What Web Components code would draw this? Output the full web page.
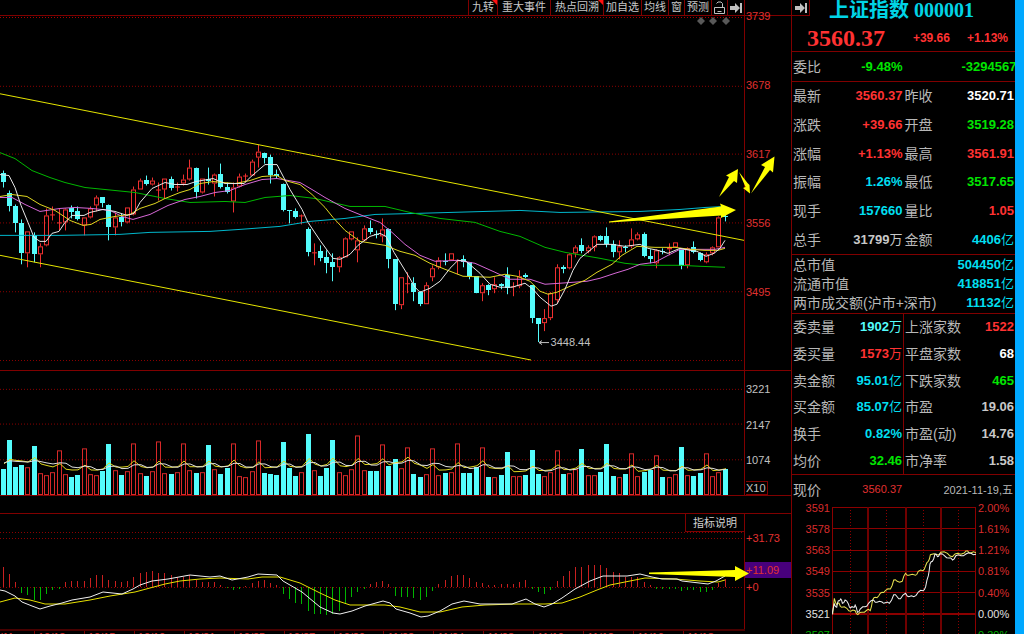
<!DOCTYPE html>
<html lang="zh-CN">
<head>
<meta charset="utf-8">
<title>上证指数 000001</title>
<style>
html, body { margin: 0; height: 100%; background: #000; }
</style>
</head>
<body>
<stock-terminal></stock-terminal>
<script>
const SANS = '"Liberation Sans", "Noto Sans CJK SC", sans-serif';

class BaseElement extends HTMLElement {
  connectedCallback() {
    if (this.shadowRoot) return;
    this.attachShadow({ mode: 'open' }).innerHTML =
      `<style>*{box-sizing:border-box}${this.styles()}</style>${this.markup()}`;
  }
}

/* candles: [high, body top, body bottom, low, rising?] */
const CANDLES = `170 172 181 187 c|190 193 206 211 c|204 206 223 232 c|219 223 253 264 c|231 231 253 267 r|232 235 254 262 c|243 246 254 267 r|208 215 245 246 r|206 214 214 220 r|208 222 222 230 r|208 209 222 230 r|205 208 212 218 c|206 211 219 220 c|217 217 225 235 r|206 208 217 218 r|195 197 205 211 r|197 197 203 207 c|204 205 227 240 c|212 217 227 235 r|213 217 222 226 c|207 207 222 223 r|186 189 214 215 r|178 180 189 189 r|175 179 183 185 c|177 180 184 185 r|182 189 189 200 r|178 178 189 198 r|176 178 187 190 c|182 186 186 191 r|174 179 183 185 r|159 167 179 180 r|167 167 191 198 c|178 178 192 193 r|167 178 180 184 c|173 174 183 196 r|163 173 186 188 c|182 186 191 193 c|182 187 201 212 r|173 176 186 187 r|173 175 175 182 r|159 161 175 175 r|144 151 157 167 r|152 152 157 163 c|154 156 174 183 c|169 173 175 178 c|183 183 210 211 c|210 210 211 223 c|208 211 217 218 c|214 215 216 224 r|227 229 252 256 c|243 252 252 265 r|245 251 258 261 c|250 257 263 273 c|253 262 267 281 c|256 257 267 272 r|237 238 257 257 r|231 231 239 240 r|237 240 250 262 r|225 228 240 241 r|220 228 232 234 c|230 234 234 238 c|218 229 236 242 r|228 229 259 268 c|259 259 304 310 c|277 277 305 309 r|272 283 283 293 r|277 283 292 301 c|291 292 304 306 c|282 285 304 304 r|265 268 277 281 r|257 260 267 269 r|253 261 261 265 c|253 253 260 260 r|259 260 260 274 r|255 259 262 267 c|262 262 276 279 c|276 276 293 293 c|283 285 293 301 r|284 285 290 295 c|277 284 289 293 r|283 284 286 289 c|267 275 288 294 c|282 286 286 296 r|270 276 286 288 r|273 275 277 278 c|285 285 318 323 c|318 318 324 342 c|309 318 323 331 r|292 293 318 320 r|264 267 300 303 r|265 267 269 273 c|253 254 268 269 r|245 247 253 257 r|238 245 251 253 c|245 247 251 253 r|235 236 247 251 r|235 236 240 241 c|227 236 244 247 c|240 244 252 257 c|240 246 252 259 r|245 247 247 252 c|228 239 246 248 r|232 234 239 240 r|232 234 256 257 c|249 256 259 263 c|249 250 263 268 r|248 251 251 254 c|243 247 249 255 r|242 242 247 247 r|250 250 266 269 c|247 248 265 268 r|241 247 252 253 c|252 253 260 261 c|252 254 262 263 r|246 247 253 255 r|216 217 247 247 r|212 216 217 221 c`
  .split('|').map(s => s.split(' '));

/* bar tops, in thirds of a unit below the pane's origin */
const VOLUME = '331c 243c 325c 318c 323r 262c 343r 348r 340r 273r 346r 355c 347c 268r 346r 348r 336c 256c 332r 347c 337r 251r 343r 350c 337r 246r 343r 345c 340r 251r 334r 342c 340r 259c 329r 345c 328c 251r 350r 355r 337r 244r 342c 345c 347c 248c 326c 350c 340r 224c 334r 352c 328c 243c 340r 348r 329r 228r 334r 337c 337c 255r 321c 300c 326r 265r 346c 355c 346r 268r 348r 343c 340r 251r 342c 342c 323c 263r 355c 355r 347c 278c 352r 352r 347c 273c 345c 352r 340r 274r 345c 343r 330r 270c 348r 348r 340c 254c 350c 355r 346c 281r 350r 340c 333c 287r 355c 353r 346r 264c 348r 350c 342c 281r 350r 340r 330c'.split(' ');

const HIST = [186,207,231,264,270,285,285,266,254,251,232,227,227,227,219,210,210,225,227,232,227,216,203,200,197,205,205,210,216,216,211,225,230,232,232,240,250,254,251,243,235,228,224,234,240,266,282,294,297,318,326,328,330,327,318,294,275,261,251,237,232,227,237,272,275,276,279,285,275,257,237,225,213,210,210,219,232,235,240,240,237,237,237,230,225,251,261,267,254,227,213,197,186,185,181,180,181,189,200,205,216,216,216,230,240,251,251,251,251,258,256,256,261,261,256,234,222];

const xAt = i => Math.round(3.6 + i * 6.224);
const line = (pts, color) => `<polyline points="${pts}" fill="none" stroke="${color}" stroke-width="1"/>`;
const dotted = (y, w = 744, c = '#8c0000') =>
  `<path d="M0 ${y}.5H${w}" stroke="${c}" stroke-dasharray="1 2" shape-rendering="crispEdges"/>`;
const svg = (w, h, body) => `<svg viewBox="0 0 ${w} ${h}" preserveAspectRatio="none" aria-hidden="true">${body}</svg>`;
const CHART_CSS = ':host{display:block;min-width:0;min-height:0;overflow:hidden}svg{display:block;width:100%;height:100%}';

customElements.define('price-chart', class extends BaseElement {
  styles() {
    return CHART_CSS + `:host{position:relative}
      .low{position:absolute;left:74%;top:92.2%;transform:translateY(-50%);font:11px/16px ${SANS};color:#c0c0c0}`;
  }
  markup() {
    const bars = CANDLES.map(([h, t, b, l, k], i) => {
      const x = xAt(i), up = k === 'r';
      if (!up) return `<path d="M${x - .5} ${h}V${l}" stroke="#54fcfc"/><rect x="${x - 3}" y="${t}" width="5" height="${Math.max(1, b - t)}" fill="#54fcfc"/>`;
      if (b - t < 2) return `<path d="M${x - .5} ${h}V${l}M${x - 3} ${+t + .5}h5" stroke="#f03030"/>`;
      return `<path d="M${x - .5} ${h}V${t}M${x - .5} ${b}V${l}" stroke="#f03030"/><rect x="${x - 2.5}" y="${+t + .5}" width="4" height="${b - t - 1}" fill="none" stroke="#f03030"/>`;
    }).join('');
    const lines = [
      ['0,235 60,235 120,234 150,232 210,231 240,229 280,226 310,221 345,218 375,214 415,213 450,212 520,210 560,212 640,211 680,209 705,207 725,206', '#00b8cc'],
      ['0,152 15,158 32,170 50,177 65,182 85,187 105,189 135,192 165,198 190,202 225,201 245,202 265,197 290,195 315,198 350,206 385,206 410,212 440,218 475,222 500,231 520,236 545,247 565,252 600,258 625,263 645,265 680,265 700,266 725,267', '#00b800'],
      ['0,197 12,197 25,204 40,211 60,208 75,207 92,208 110,210 122,216 133,219 150,214 168,205 185,199 200,196 215,192 230,190 245,184 262,179 277,178 300,182 312,189 325,197 345,208 362,215 380,222 392,232 405,244 420,255 435,261 458,260 475,263 495,272 510,279 530,279 545,284 560,283 587,281 600,278 615,273 628,269 640,264 655,262 670,254 680,249 700,249 715,249 725,247', '#d868d8'],
      ['0,196 12,194 27,196 40,204 55,210 70,220 83,225 91,224 100,219 115,216 130,214 140,208 155,203 165,198 180,192 190,189 200,183 213,181 235,183 250,180 262,176 277,175 285,180 300,184 312,194 325,207 333,217 345,230 360,241 385,245 400,251 415,255 430,263 445,269 463,276 490,277 505,274 517,276 530,281 540,291 548,294 557,292 570,286 585,280 597,272 612,264 622,255 637,246 655,247 675,247 690,249 705,250 718,250 725,248', '#e0d820'],
      ['0,174 9,175 15,187 21,205 28,222 34,237 40,241 46,241 52,233 59,231 65,222 72,215 84,215 90,212 103,209 115,211 127,215 134,213 140,202 152,188 165,182 175,184 187,184 196,181 213,178 225,183 244,183 250,177 258,170 265,164 277,164 290,189 302,209 308,222 320,240 333,258 340,259 350,254 358,245 370,236 380,233 386,236 394,252 408,275 415,287 420,292 430,288 440,281 450,268 458,260 466,261 480,273 490,284 500,287 512,287 525,283 533,289 540,297 551,306 557,304 565,289 573,270 580,258 590,250 597,244 612,244 625,246 640,244 648,248 658,250 668,253 680,248 690,250 697,251 706,256 714,253 720,248 725,240', '#e8e8e8'],
      ['0,93 744,240', '#e6e600'], ['0,255 531,360', '#e6e600']
    ];
    const gem = x => `<path d="M${x} 16l4 4-4 4-4-4z" fill="#585858"/>`;
    return svg(744, 355, `<g transform="translate(0 -15)">
      ${dotted(16, 744, '#b00000')}${[85, 153, 222, 291, 360].map(y => dotted(y)).join('')}
      <g shape-rendering="crispEdges">${bars}</g>
      ${lines.map(a => line(...a)).join('')}
      ${gem(701)}${gem(713)}${gem(726)}
      <path d="M539 342.500h10M542 340.500l-3 2 3 2" stroke="#c0c0c0" fill="none"/></g>`)
      + '<span class="low">3448.44</span>';
  }
});

customElements.define('volume-chart', class extends BaseElement {
  styles() { return CHART_CSS; }
  markup() {
    const tops = VOLUME.map(v => parseInt(v, 10) / 3);
    const bars = VOLUME.map((v, i) => {
      const x = xAt(i), y = Math.round(tops[i]) - 11;
      return v.endsWith('c')
        ? `<rect x="${x - 3}" y="${y}" width="5" height="${125 - y}" fill="#54fcfc"/>`
        : `<rect x="${x - 2.5}" y="${y + .5}" width="4" height="${124 - y}" fill="none" stroke="#d82828"/>`;
    }).join('');
    const average = n => tops.map((_, i) => {
      let sum = 0;
      for (let k = i - n + 1; k <= i; k++) sum += k < 0 ? 103 : tops[k];
      return `${xAt(i)},${(sum / n - 11).toFixed(1)}`;
    }).join(' ');
    return svg(744, 125, [18, 53, 89].map(y => dotted(y)).join('')
      + `<g shape-rendering="crispEdges">${bars}</g>` + line(average(5), '#e0d820') + line(average(10), '#e0e0e0'));
  }
});

customElements.define('macd-chart', class extends BaseElement {
  styles() { return CHART_CSS; }
  markup() {
    const bars = HIST.map((v, i) => {
      const x = xAt(i) - .5, y = Math.round(v / 3) + 505;
      return `<path d="M${x} 587V${y}" stroke="${v < 247 ? '#c82020' : '#00b400'}"/>`;
    }).join('');
    return svg(744, 115, `<g transform="translate(0 -514)">${dotted(532)}${dotted(538)}${dotted(587)}
      <g shape-rendering="crispEdges">${bars}</g>`
      + line('0,602 15,598 30,600 45,604 65,604 90,600 110,596 135,592 150,588 165,584 180,581 200,579 220,578 248,579 262,577 280,577 300,583 320,593 335,600 350,605 385,605 400,607 420,612 440,612 462,607 485,605 515,604 545,604 562,603 580,597 597,590 610,585 630,581 645,578 675,579 700,581 718,582 725,580', '#e6e000')
      + line('0,590 5,591 15,596 22,602 32,606 40,609 50,606 62,603 72,600 90,597 103,592 122,594 133,589 140,585 152,581 168,579 190,575 210,577 220,576 232,580 248,577 258,574 277,575 283,581 302,592 320,607 333,613 340,614 352,611 365,606 383,601 390,603 396,609 410,613 421,617 428,616 440,611 452,604 464,601 480,604 512,604 526,599 535,604 544,607 552,604 562,598 575,589 590,581 603,576 627,576 640,574 652,577 662,579 677,579 682,581 708,584 716,581 725,576', '#f0f0f0')
      + '</g>');
  }
});

customElements.define('intraday-chart', class extends BaseElement {
  styles() { return CHART_CSS; }
  markup() {
    const conv = s => s.split(' ').map(p => {
      const [x, y] = p.split(',').map(Number);
      return [(x - 141) / 3, (y - 99) / 3];
    });
    const jitter = (s, amount) => {
      const p = conv(s), out = [];
      p.forEach(([x, y], i) => {
        out.push(`${x.toFixed(1)},${y.toFixed(1)}`);
        if (i < p.length - 1) {
          const [nx, ny] = p[i + 1];
          out.push(`${((x + nx) / 2).toFixed(1)},${((y + ny) / 2 + (i % 2 ? amount : -amount)).toFixed(1)}`);
        }
      });
      return out.join(' ');
    };
    const grid = [0, 21, 43, 64, 85].map(y => `M0 ${y}.5H143`).join('');
    return svg(143, 127, `<g shape-rendering="crispEdges" fill="none" stroke="#8c0000"><path d="${grid}M.5 0V127M142.500 0V127"/>
      <path d="M0 107H143" stroke-width="2"/><path d="M36 0V127M73 0V127M108 0V127" stroke-width="2" stroke="#700000"/>
      <path d="M18.500 0V127M54.500 0V127M90.500 0V127M125.500 0V127" stroke-dasharray="1 2"/></g>`
      + line(jitter('143,420 148,373 155,392 162,388 170,400 185,403 197,412 210,410 218,422 230,415 245,408 255,410 262,378 270,370 280,366 290,355 300,350 315,345 325,318 335,322 350,322 360,298 370,304 390,304 398,292 412,290 420,275 428,262 434,242 455,242 465,235 485,238 500,248 515,238 535,237 545,231 555,237 570,236', 1), '#e6e050')
      + line(jitter('141,422 148,390 155,400 160,380 167,375 172,388 180,378 190,390 196,402 205,400 210,393 217,415 225,405 240,398 250,388 265,378 275,385 290,384 300,386 312,388 325,362 335,368 345,374 360,358 370,368 385,368 398,354 412,350 420,338 428,305 433,270 440,262 448,240 455,248 462,240 475,244 490,252 500,258 510,245 525,245 540,240 555,238 570,241', 1), '#f0f0f0'));
  }
});

/* one pane: plot on the left, scale labels on the right */
customElements.define('chart-pane', class extends BaseElement {
  styles() {
    return `:host{display:grid;grid-template-columns:minmax(0,1fr) 46px;border-top:1px solid #800000;min-height:0}
      .plot{display:grid;min-width:0;min-height:0;border-right:1px solid #800000}
      .plot ::slotted(*){grid-area:1/1}
      .axis{display:flex;flex-direction:column;min-height:0}`;
  }
  markup() { return '<div class="plot"><slot></slot></div><div class="axis"><slot name="axis"></slot></div>'; }
});

const SKIP = (c = '#c0c0c0') => `<svg width="12" height="10" viewBox="0 0 12 10" aria-hidden="true"><path d="M0 3h5V0l5 5-5 5V7H0zM10 0h2v10h-2z" fill="${c}"/></svg>`;

customElements.define('tool-bar', class extends BaseElement {
  styles() {
    return `:host{display:grid;grid-template-columns:minmax(0,1fr) 46px;height:15px}
      nav{display:flex;justify-content:flex-end;border-right:1px solid #800000}
      button{appearance:none;margin:0;padding:0 3px;height:15px;border:0;border-left:1px solid #800000;background:#000;color:#c8c8c8;
        font:11px/15px ${SANS};white-space:nowrap;position:relative;display:flex;align-items:center;justify-content:center}
      .m{padding:0 4px}
      .s{padding:0 2px}
      .hot::after{content:"";position:absolute;right:0;top:0;width:5px;height:5px;background:#ff1010;clip-path:polygon(0 0,100% 0,100% 100%)}`;
  }
  markup() {
    return `<nav><button class="hot" type="button">九转</button><button class="m" type="button">重大事件</button><button class="hot m" type="button">热点回溯</button><button class="s" type="button">加自选</button><button class="s" type="button">均线</button><button class="s" type="button">窗</button><button class="s" type="button">预测</button>
      <button class="s" type="button" aria-label="锁定"><svg width="11" height="13" viewBox="0 0 11 13" fill="none" stroke="#c0c0c0"><path d="M.5 6.500h10v6H.5zM8.500 6.500V2.500l-1.500-1.500h-3l-1.500 1.500M3.500 10.500h4"/></svg></button>
      <button class="s" type="button" aria-label="移到最右">${SKIP()}</button></nav>`;
  }
});

/* the strip runs past the window's lower edge */
customElements.define('date-strip', class extends BaseElement {
  styles() {
    return `:host{display:block;border-top:2px solid #480000;height:5px;overflow:hidden;margin-right:46px}
      ol{list-style:none;display:grid;grid-template-columns:68fr repeat(13,100fr) 124fr;margin:0;padding:0}
      li{min-width:0;border-left:1px solid #800000;padding-left:3px;white-space:nowrap;font:11px/12px ${SANS};color:#e03030}
      li:first-child{border:0;padding:0 20px 0 0;display:flex;justify-content:flex-end}`;
  }
  markup() {
    return `<ol>${'10/11 10/13 10/15 10/19 10/21 10/25 10/27 10/29 11/02 11/04 11/08 11/10 11/12 11/16 11/18'.split(' ').map(d => `<li>${d}</li>`).join('')}</ol>`;
  }
});

/* rows="label,value,colour[,label,value,colour];…" */
customElements.define('quote-table', class extends BaseElement {
  styles() {
    return `:host{display:block;border-top:1px solid #800000;min-height:0}
      table{width:100%;height:100%;border-collapse:collapse;table-layout:fixed}
      th,td{padding:0;white-space:nowrap;line-height:16px;vertical-align:middle}
      th{font-weight:400;font-size:14px;text-align:left;color:#b8b8b8;padding-left:1px}
      td{font-weight:700;font-size:13px;text-align:right;padding-right:1px}
      i{font-style:normal;font-weight:400}
      .a{width:20%}.b{width:30%}.c{width:26%}.d{width:24%}.w{width:70%}
      :host([divided]) .c{border-left:1px solid #800000}
      .red{color:#ff3232}.green{color:#00e600}.cyan{color:#00dff0}.aqua{color:#54fcfc}.white{color:#fff}.gray{color:#c8c8c8}`;
  }
  markup() {
    const cell = (l, v, c, k1, k2) => `<th scope="row" class="${k1}">${l}</th><td class="${k2} ${c}">${v.replace(/[万亿]/, '<i>$&</i>')}</td>`;
    return `<table>${this.getAttribute('rows').split(';').map(r => {
      const f = r.split(',');
      return '<tr>' + (f.length > 3 ? cell(f[0], f[1], f[2], 'a', 'b') + cell(f[3], f[4], f[5], 'c', 'd') : cell(f[0], f[1], f[2], 'w', '')) + '</tr>';
    }).join('')}</table>`;
  }
});

customElements.define('quote-panel', class extends BaseElement {
  styles() {
    return `:host{display:grid;grid-template-rows:51px 30px 173fr 59fr 161fr 33px 127fr;border-left:1px solid #800000;min-height:0;overflow:hidden;font-family:${SANS}}
      header{display:grid;grid-template-columns:18px 1fr;grid-template-rows:20px 1fr}
      header button{appearance:none;margin:0;padding:0;height:16px;background:#000;border:solid #800000;border-width:0 1px 1px 0;display:flex;align-items:center;justify-content:center}
      h1{margin:0;font:700 20px/20px "Liberation Serif","Noto Sans CJK SC",serif;color:#00d4e6;padding-left:19px;white-space:nowrap}
      .now{grid-column:1/3;display:flex;align-items:center;color:#ff3232;font-weight:700;font-size:12px;padding:4px 7px 0 15px;white-space:nowrap}
      .now strong{font:700 24px/24px "Liberation Serif",serif;margin-right:auto}
      .now span + span{margin-left:17px}
      .last{display:flex;align-items:center;justify-content:space-between;border-top:1px solid #800000;font-size:11px;color:#b8b8b8;padding:0 2px 4px 1px}
      .last b{font-weight:400;font-size:14px}.last em{font-style:normal;color:#e03030}
      .mini{display:grid;grid-template-columns:40px minmax(0,1fr) 39px;min-height:0}
      ol{list-style:none;margin:-7px 0 0;padding:0;height:100%;font-size:11px;line-height:16px;color:#d82c2c}
      li{height:calc(100%/6)}
      ol.l{text-align:right;padding-right:2px}ol.r{padding-left:2px}
      .z{color:#e0e0e0}.g{color:#00b400}`;
  }
  markup() {
    const scale = (k, s) => `<ol class="${k}">${s.split(' ').map((t, i) => `<li class="${i === 5 ? 'z' : i === 6 ? 'g' : ''}">${t}</li>`).join('')}</ol>`;
    return `<header><button type="button" aria-label="收起">${SKIP()}</button><h1>上证指数 000001</h1>
      <div class="now"><strong>3560.37</strong><span>+39.66</span><span>+1.13%</span></div></header>
      <quote-table rows="委比,-9.48%,green,,-3294567,green"></quote-table>
      <quote-table rows="最新,3560.37,red,昨收,3520.71,white;涨跌,+39.66,red,开盘,3519.28,green;涨幅,+1.13%,red,最高,3561.91,red;振幅,1.26%,cyan,最低,3517.65,green;现手,157660,cyan,量比,1.05,red;总手,31799万,gray,金额,4406亿,cyan"></quote-table>
      <quote-table rows="总市值,504450亿,cyan;流通市值,418851亿,cyan;两市成交额(沪市+深市),11132亿,cyan"></quote-table>
      <quote-table divided rows="委卖量,1902万,aqua,上涨家数,1522,red;委买量,1573万,red,平盘家数,68,white;卖金额,95.01亿,cyan,下跌家数,465,green;买金额,85.07亿,cyan,市盈,19.06,gray;换手,0.82%,cyan,市盈(动),14.76,gray;均价,32.46,green,市净率,1.58,gray"></quote-table>
      <div class="last"><b>现价</b><em>3560.37</em><span>2021-11-19,五</span></div>
      <div class="mini">${scale('l', '3591 3578 3563 3549 3535 3521 3507')}<intraday-chart></intraday-chart>${scale('r', '2.00% 1.61% 1.21% 0.81% 0.40% 0.00% 0.39%')}</div>`;
  }
});

/* hand-drawn forecast arrows, laid over all panes */
customElements.define('arrow-marks', class extends BaseElement {
  styles() { return ':host{display:block;position:absolute;inset:0;pointer-events:none}svg{display:block;width:100%;height:100%}'; }
  markup() {
    return svg(791, 634, `<g fill="#ff0"><path d="M609 221.500L721 206.500 720 203.500 736 210 721 218V215.500L609 222.500z"/>
      <path d="M719 197L729 177 726 175.500 738 169 737 183 734 181z"/>
      <path d="M739 172L745.500 187 743 188 750 193.500 749.500 185 747.500 183z"/>
      <path d="M751 193.500L765 167 761 165 774.500 156.500 773 172.500 770 170z"/>
      <path d="M649 572.500L735 570V566L749 573.500 735 581V577L649 574z"/></g>`);
  }
});

customElements.define('stock-terminal', class extends BaseElement {
  styles() {
    return `:host{display:grid;grid-template-columns:minmax(0,1fr) 224px 9px;height:100vh;overflow:hidden;background:#000;font-family:${SANS}}
      main{position:relative;display:grid;grid-template-rows:15px 355fr 125fr 18px 116fr 5px;min-height:0;min-width:0}
      .gap{border-top:1px solid #800000}
      .side{background:#00a8ff}
      ol{list-style:none;margin:0;padding:0;flex:1;display:flex;flex-direction:column;font-size:11px;line-height:16px;color:#c0c0c0;min-height:0}
      li{flex:1 0 0;min-height:0;padding-left:1px}
      .price{margin-top:-8px;color:#e03030}
      .price li{flex-grow:69}.price li:last-child{flex-grow:86}
      .vol{padding-top:10px}
      .vol li{flex-grow:36}.vol li:nth-child(3){flex-grow:28}.vol li:last-child{flex-grow:15}
      .vol span{display:inline-block;border:1px solid #800000;border-left:0;line-height:12px;padding-right:1px}
      .macd{padding-top:16px;color:#e03030}
      .macd li{flex-grow:32}.macd li:nth-child(2){flex-grow:17}.macd li:last-child{flex-grow:50}
      .macd span{display:block;background:#48007c;margin-left:-1px;padding-left:1px}
      button{appearance:none;justify-self:end;align-self:start;z-index:1;margin:0;width:59px;height:18px;padding:0;background:#000;color:#d0d0d0;border:solid #800000;border-width:0 0 1px 1px;font:11px/16px ${SANS}}`;
  }
  markup() {
    return `<main><tool-bar></tool-bar>
      <chart-pane><price-chart></price-chart><ol class="price" slot="axis"><li>3739</li><li>3678</li><li>3617</li><li>3556</li><li>3495</li></ol></chart-pane>
      <chart-pane><volume-chart></volume-chart><ol class="vol" slot="axis"><li>3221</li><li>2147</li><li>1074</li><li><span>X10</span></li></ol></chart-pane>
      <div class="gap"></div>
      <chart-pane><macd-chart></macd-chart><button type="button">指标说明</button><ol class="macd" slot="axis"><li>+31.73</li><li><span>+11.09</span></li><li>+0</li></ol></chart-pane>
      <date-strip></date-strip><arrow-marks></arrow-marks></main>
      <quote-panel></quote-panel><div class="side"></div>`;
  }
});
</script>
</body>
</html>
